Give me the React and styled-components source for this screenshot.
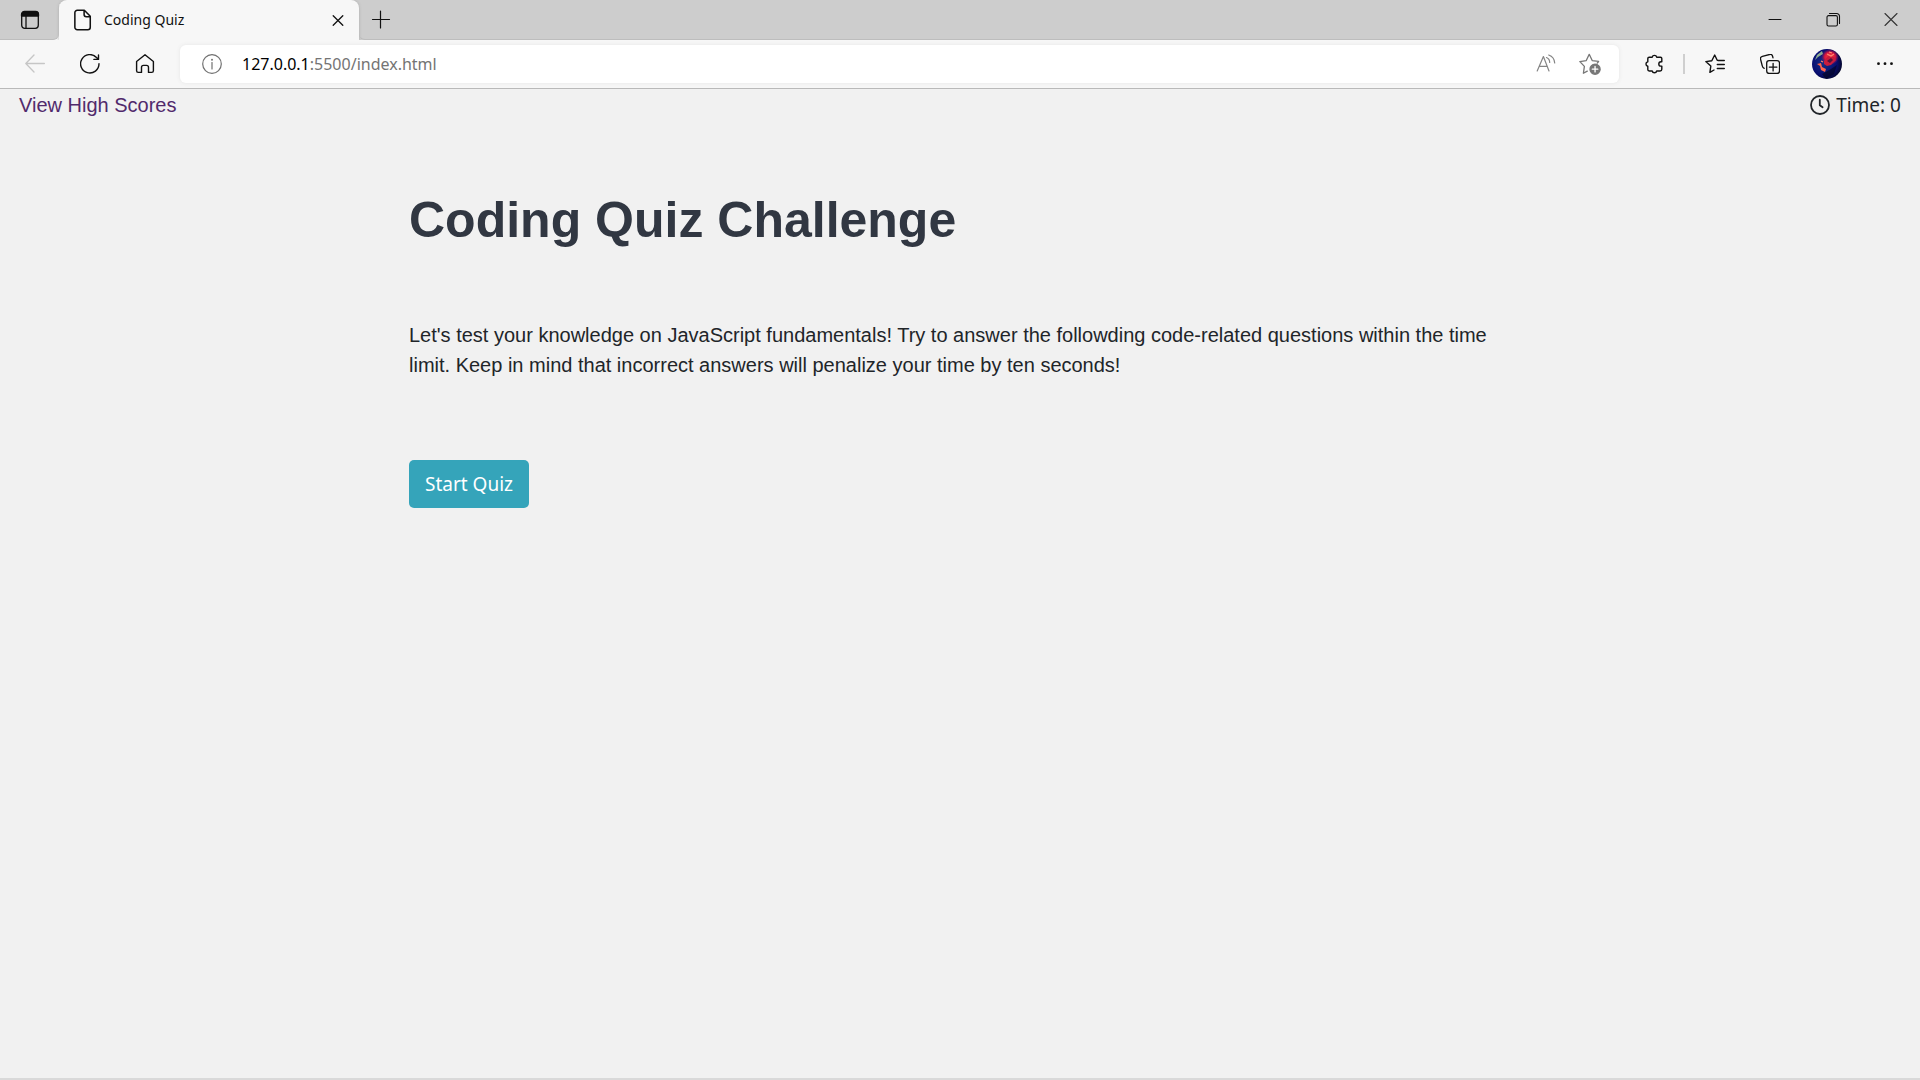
import React from "react";
import styled, { createGlobalStyle } from "styled-components";

const ui = `"Noto Sans", "Open Sans", sans-serif`;
const copy = `"Liberation Sans", Arial, sans-serif`;

const GlobalStyle = createGlobalStyle`
  *, *::before, *::after { box-sizing: border-box; }
  body { margin: 0; background: #f1f1f1; color: #212529; font: 20px/30px ${copy}; }
  button, input { font: inherit; color: inherit; }
  svg { display: block; flex: none; }
`;

const Page = styled.div`
  min-height: 100vh;
  display: flex;
  flex-direction: column;
  border-bottom: 2px solid #d9d9d9;
`;

const TabStrip = styled.div`
  display: flex;
  height: 40px;
  background: #cdcdcd;
  font-family: ${ui};
`;

const IconButton = styled.button`
  display: flex;
  align-items: center;
  justify-content: center;
  flex: none;
  width: ${(p) => p.$width || 55}px;
  padding: 0;
  border: 0;
  background: none;
  color: ${(p) => p.$color || "#111"};
`;

const StripEdge = styled.div`
  display: flex;
  justify-content: center;
  width: 59px;
  border-bottom: 1px solid #bdbdbd;
  border-bottom-right-radius: 6px;
  box-shadow: 4px 4px 0 #f7f7f7;
  background: #cdcdcd;
`;

const Tab = styled.div`
  position: relative;
  display: flex;
  align-items: center;
  width: 300px;
  padding: 0 5px 0 13px;
  border-radius: 8px 8px 0 0;
  background: #f7f7f7;
  box-shadow: 0 0 3px #aaa;
  color: #111;
`;

const TabTitle = styled.span`
  flex: 1;
  padding-left: 10px;
  font-size: 14px;
`;

const StripRest = styled.div`
  display: flex;
  flex: 1;
  justify-content: space-between;
  border-bottom: 1px solid #bdbdbd;
  border-bottom-left-radius: 6px;
`;

const Group = styled.div`
  display: flex;
`;

const Toolbar = styled.div`
  position: relative;
  display: flex;
  height: 49px;
  padding: 0 8px 0 7px;
  border-bottom: 1px solid #b9b9b9;
  background: #f7f7f7;
  font-family: ${ui};
`;

const AddressBar = styled.form`
  display: flex;
  align-items: center;
  flex: 1;
  height: 38px;
  margin: 5px 7px 5px 8px;
  padding: 0 7px 0 22px;
  border-radius: 6px;
  background: #fff;
  box-shadow: 0 0 4px #e6e6e6;
  color: #707070;
  font-size: 16px;
`;

const Host = styled.label`
  padding-left: 20px;
  color: #000;
`;

const Path = styled.input`
  flex: 1;
  min-width: 0;
  padding: 0;
  border: 0;
  outline: 0;
  background: none;
  color: #747474;
`;

const Divider = styled.div`
  align-self: center;
  width: 2px;
  height: 20px;
  margin: 0 2px;
  background: #cfcfcf;
`;

const QuizHeader = styled.header`
  display: flex;
  justify-content: space-between;
  padding: 1px 19px;
`;

const ScoresLink = styled.a`
  color: #512a6c;
  text-decoration: none;
`;

const Timer = styled.div`
  display: flex;
  align-items: center;
  gap: 6px;
  font: 19px/30px ${ui};
`;

const Main = styled.main`
  width: 100%;
  max-width: 1142px;
  margin: 0 auto;
  padding: 69px 20px;
`;

const Title = styled.h1`
  margin: 0 0 70px;
  color: #313742;
  font-size: 50px;
  line-height: 60px;
`;

const Intro = styled.p`
  margin: 0 0 80px;
`;

const StartButton = styled.button`
  height: 48px;
  padding: 0 16px;
  border: 0;
  border-radius: 5px;
  background: #35a4ba;
  color: #fff;
  font: 19px/30px ${ui};
`;

function Icon({ size = 20, width = 1.3, children }) {
  return (
    <svg width={size} height={size} viewBox="0 0 20 20" fill="none" stroke="currentColor"
      strokeWidth={width} strokeLinecap="round" strokeLinejoin="round" aria-hidden="true">
      {children}
    </svg>
  );
}

const Avatar = () => (
  <svg width="30" height="30" viewBox="0 0 30 30" aria-hidden="true">
    <defs>
      <clipPath id="disc"><circle cx="15" cy="15" r="15" /></clipPath>
      <radialGradient id="space" cx=".4" cy=".45" r=".65">
        <stop offset="0" stopColor="#173186" /><stop offset=".65" stopColor="#080d70" /><stop offset="1" stopColor="#04051d" />
      </radialGradient>
      <radialGradient id="glow"><stop offset="0" stopColor="#ff4543" /><stop offset=".6" stopColor="#d8163d" /><stop offset="1" stopColor="#7c1262" stopOpacity="0" /></radialGradient>
    </defs>
    <g clipPath="url(#disc)">
      <path d="M0 0h30v30H0z" fill="url(#space)" />
      <ellipse cx="18" cy="8" rx="9" ry="8" fill="url(#glow)" />
      <path d="M3 11l2-5 5-4 1 3-5 3z" fill="#8fae91" />
      <path d="M12 12l4-5 6 1 2 3-5 5-4 1-3-2z" fill="#c91c3c" />
      <path d="M15 12l4-3 2 2-3 3z" fill="#54133b" />
      <path d="M5 15l4-1 1 4 4 2-1 3-4-2-1-4z" fill="#ff654d" />
      <path d="M15 5l4 2 3-2M17 3l3 1M9 12l2 1" stroke="#ff8a70" strokeWidth="1.2" fill="none" />
      <path d="M10 25l9-5 6-4-3 9-8 5z" fill="#03051f" opacity=".65" />
    </g>
  </svg>
);

export default function App() {
  return (
    <Page>
      <GlobalStyle />
      <TabStrip>
        <StripEdge>
          <IconButton aria-label="Tab actions">
            <Icon>
              <rect x="1.7" y="1.7" width="16.6" height="16.6" rx="3" />
              <path d="M1.5 6V4.5a3 3 0 013-3h11a3 3 0 013 3V6z" fill="currentColor" />
              <path d="M6 6v12" />
            </Icon>
          </IconButton>
        </StripEdge>
        <Tab>
          <Icon size={22} width={1.4}>
            <path d="M4.8 1.2h6.4l5.4 5.4v10a2.2 2.2 0 01-2.2 2.2H4.8a2.2 2.2 0 01-2.2-2.2V3.4a2.2 2.2 0 012.2-2.2zM11 1.4V5a2 2 0 002 2h3.4" />
          </Icon>
          <TabTitle>Coding Quiz</TabTitle>
          <IconButton $width={32} aria-label="Close tab">
            <Icon><path d="M5.2 5.7l9.6 9.6M14.8 5.7l-9.6 9.6" /></Icon>
          </IconButton>
        </Tab>
        <StripRest>
          <IconButton $width={43} aria-label="New tab">
            <Icon width={1.2}><path d="M1.5 9.5h17M9.5 1v17" /></Icon>
          </IconButton>
          <Group>
            <IconButton $width={58} aria-label="Minimize">
              <Icon width={1}><path d="M4 9.5h12" /></Icon>
            </IconButton>
            <IconButton $width={58} aria-label="Restore">
              <Icon width={1.1}>
                <rect x="4" y="5.6" width="10.4" height="10.4" rx="1.5" />
                <path d="M6.5 3.5h7.2a2.8 2.8 0 012.8 2.8v7.2" />
              </Icon>
            </IconButton>
            <IconButton $width={58} $color="#333" aria-label="Close window">
              <Icon width={1.1}><path d="M4 3.5l12 12M16 3.5l-12 12" /></Icon>
            </IconButton>
          </Group>
        </StripRest>
      </TabStrip>

      <Toolbar>
        <IconButton $color="#c6c6c6" aria-label="Back">
          <Icon width={1.3}><path d="M19.4 9.5H1M9 1L.8 9.5 9 18" /></Icon>
        </IconButton>
        <IconButton aria-label="Refresh">
          <Icon width={1.4}><path d="M19 9.7A9.2 9.2 0 1116.5 3.5L18.5 5.3M18.5 1v4.4h-4.6" /></Icon>
        </IconButton>
        <IconButton aria-label="Home">
          <Icon width={1.4}>
            <path d="M1.6 7.5L10 .8l8.4 6.7v9.2a1.7 1.7 0 01-1.7 1.7h-3.2v-5a2 2 0 00-2-2h-3a2 2 0 00-2 2v5H3.3a1.7 1.7 0 01-1.7-1.7z" />
          </Icon>
        </IconButton>
        <AddressBar onSubmit={(event) => event.preventDefault()}>
          <Icon width={1.2}><circle cx="10" cy="10" r="9.3" /><path d="M10 8.5V15" /><circle cx="10" cy="5.7" r=".4" fill="currentColor" /></Icon>
          <Host htmlFor="address">127.0.0.1</Host>
          <Path id="address" type="text" defaultValue=":5500/index.html" />
          <IconButton type="button" $width={44} $color="#858585" aria-label="Read aloud">
            <Icon width={1.2}>
              <path d="M1.2 17L7.4 2.5 13 17M3.2 12.3h8M10.5 3.5c2 .8 3.2 2.8 3.2 5M12.7 1c3.6 1.3 5.8 4 6 8" />
            </Icon>
          </IconButton>
          <IconButton type="button" $width={44} $color="#777" aria-label="Add to favorites">
            <Icon size={22} width={1.2}>
              <path d="M7.5 16.5L4 18.4l.9-6.2L.8 7.8l5.8-.9L9.3 1.2l2.7 5.7 5.8.8-1.2 1.5" />
              <circle cx="14.6" cy="14.7" r="4.6" fill="currentColor" />
              <path d="M14.6 12.2v5M12.1 14.7h5" stroke="#fff" />
            </Icon>
          </IconButton>
        </AddressBar>
        <IconButton aria-label="Extensions">
          <Icon width={1.4}>
            <path d="M5.2 3.2h3a2.3 2.3 0 014.5 0h3.8a1.3 1.3 0 011.3 1.3v3.2H17a2.2 2.2 0 000 4.4h.8v3.2a1.7 1.7 0 01-1.7 1.7h-3.4a2.3 2.3 0 01-4.5 0h-3a1.4 1.4 0 01-1.4-1.4v-3.3a2.3 2.3 0 010-4.5V4.6a1.4 1.4 0 011.4-1.4z" />
          </Icon>
        </IconButton>
        <Divider />
        <IconButton aria-label="Favorites">
          <Icon width={1.4}>
            <path d="M9 16l-4.1 2.3.9-6.2L.8 7.6l6-.9L9.7 1l2.5 5.3M13 6.5h6.3M12.3 10.5h7M12.3 14.5h7" />
          </Icon>
        </IconButton>
        <IconButton aria-label="Collections">
          <Icon width={1.3}>
            <rect x="6.7" y="6.7" width="12.8" height="12.8" rx="2.4" />
            <path d="M13.1 9.3v7.6M9.3 13.1h7.6M4.2 14.3A3 3 0 012.3 12L.6 5.5A2.6 2.6 0 012.4 2.3L9.4.5a2.6 2.6 0 013.2 1.8l.4 1.5" />
          </Icon>
        </IconButton>
        <IconButton $width={60} aria-label="Profile"><Avatar /></IconButton>
        <IconButton aria-label="Settings and more">
          <Icon><g fill="currentColor" stroke="none"><circle cx="3.5" cy="9.7" r="1.4" /><circle cx="10" cy="9.7" r="1.4" /><circle cx="16.5" cy="9.7" r="1.4" /></g></Icon>
        </IconButton>
      </Toolbar>

      <QuizHeader>
        <ScoresLink href="#scores">View High Scores</ScoresLink>
        <Timer>
          <Icon width={1.8}><circle cx="10" cy="10" r="9" /><path d="M9.8 4.7v5.5l2.8 2" /></Icon>
          <span>Time: 0</span>
        </Timer>
      </QuizHeader>

      <Main>
        <Title>Coding Quiz Challenge</Title>
        <Intro>
          Let's test your knowledge on JavaScript fundamentals! Try to answer the followding code-related questions
          within the time limit. Keep in mind that incorrect answers will penalize your time by ten seconds!
        </Intro>
        <StartButton type="button">Start Quiz</StartButton>
      </Main>
    </Page>
  );
}
